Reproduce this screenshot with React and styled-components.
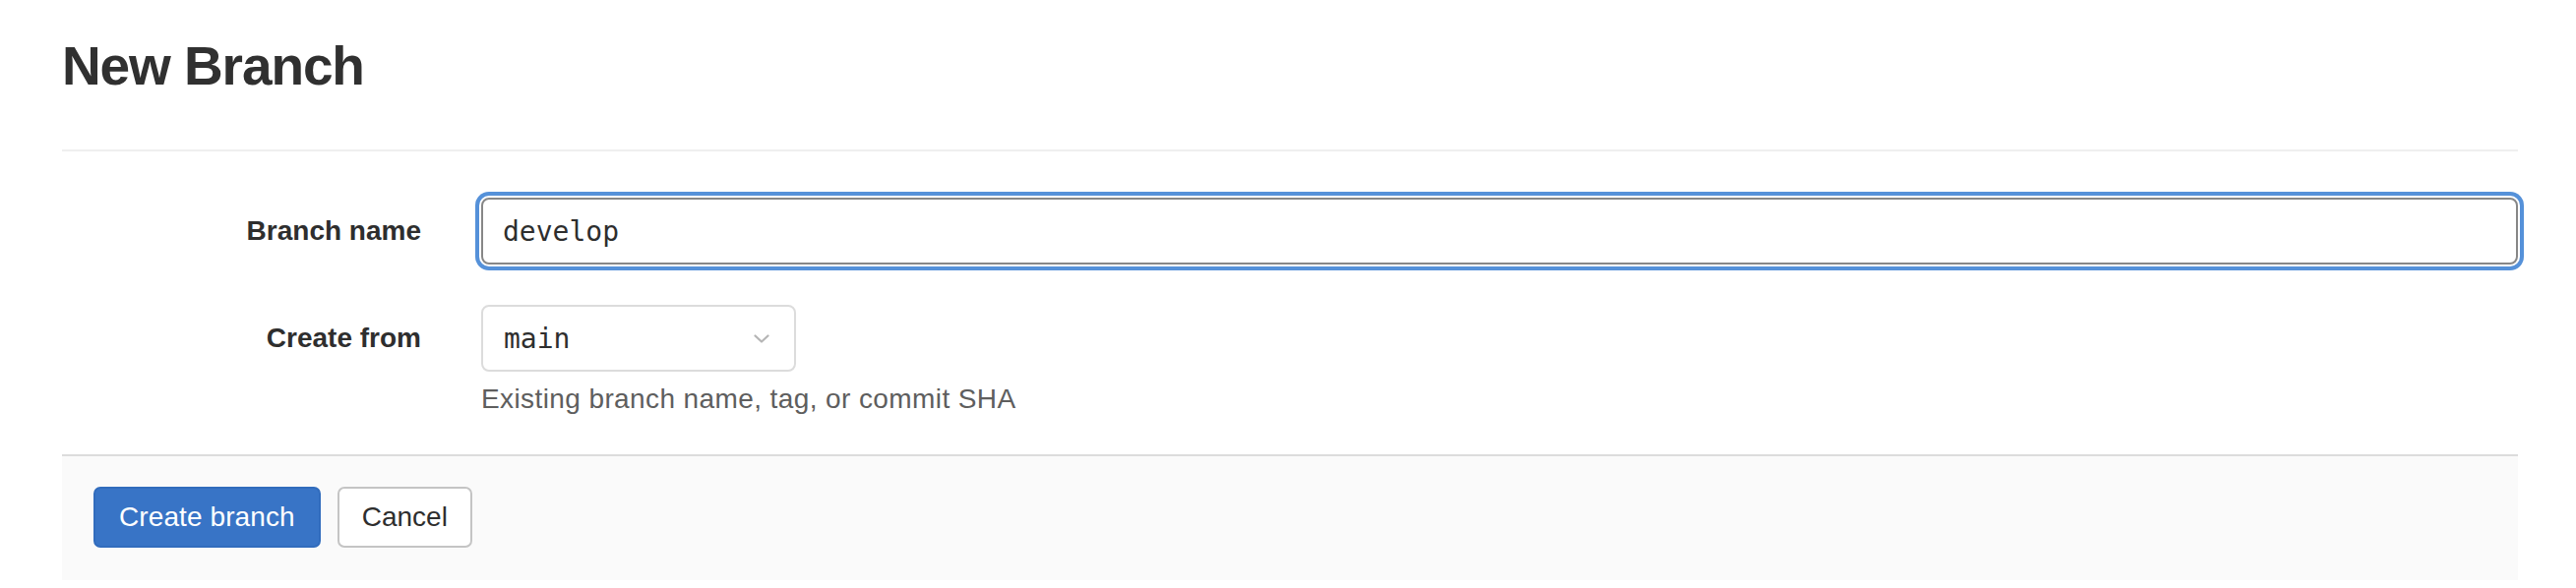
import React from "react";
import styled, { createGlobalStyle } from "styled-components";

const Global = createGlobalStyle`
  html, body { margin: 0; padding: 0; background: #fff; }
  body {
    font-family: "Liberation Sans", Arial, sans-serif;
    color: #2e2e2e;
    -webkit-font-smoothing: antialiased;
  }
  * { box-sizing: border-box; }
`;

const Page = styled.div`
  padding: 0 59px 0 63px;
  width: 2618px;
`;

const TitleBar = styled.div`
  padding: 40px 0 57px;
  border-bottom: 2px solid #efefef;
`;

const Title = styled.h3`
  margin: 0;
  font-size: 55px;
  line-height: 55px;
  font-weight: 700;
  letter-spacing: -1.1px;
  color: #303030;
`;

const Form = styled.form`
  margin: 0;
  padding-top: 47px;
`;

const Row = styled.div`
  display: grid;
  grid-template-columns: 365px 1fr;
  column-gap: 61px;
  align-items: start;
  margin-top: ${(p) => (p.$first ? "0" : "41px")};
`;

const Label = styled.label`
  height: 68px;
  display: flex;
  align-items: center;
  justify-content: flex-end;
  font-size: 28px;
  font-weight: 700;
  color: #2e2e2e;
`;

const Field = styled.div`
  display: flex;
  flex-direction: column;
  align-items: flex-start;
`;

const TextInput = styled.input`
  width: 100%;
  height: 68px;
  padding: 0 20px;
  border: 2px solid #878787;
  border-radius: 8px;
  font-family: "DejaVu Sans Mono", "Liberation Mono", monospace;
  font-size: 28px;
  color: #2e2e2e;
  background: #fff;
  outline: none;
  box-shadow: 0 0 0 2px #fff, 0 0 0 6px #5591d9;
`;

const Dropdown = styled.div`
  width: 320px;
  height: 68px;
  padding: 0 25px 0 21px;
  border: 2px solid #dcdcdc;
  border-radius: 8px;
  background: #fff;
  display: flex;
  align-items: center;
  justify-content: space-between;
  font-family: "DejaVu Sans Mono", "Liberation Mono", monospace;
  font-size: 28px;
  color: #2e2e2e;
`;

const HelpText = styled.p`
  margin: 8px 0 0;
  font-size: 28px;
  line-height: 40px;
  letter-spacing: 0.4px;
  color: #5e5e5e;
`;

const Footer = styled.div`
  margin-top: 36px;
  border-top: 2px solid #dcdcdc;
  background: #fafafa;
  padding: 31px 32px 33px;
  display: flex;
  gap: 17px;
`;

const Button = styled.button`
  height: 62px;
  padding: 0 ${(p) => (p.$primary ? "24px" : "23px")};
  border-radius: 7px;
  font-family: "Liberation Sans", Arial, sans-serif;
  font-size: 28px;
  letter-spacing: ${(p) => (p.$primary ? "0.1px" : "0")};
  cursor: pointer;
  border: 2px solid ${(p) => (p.$primary ? "#316cbd" : "#c4c4c4")};
  background: ${(p) => (p.$primary ? "#3874c6" : "#fff")};
  color: ${(p) => (p.$primary ? "#fff" : "#2e2e2e")};
`;

const Chevron = () => (
  <svg width="16" height="9" viewBox="0 0 16 9" fill="none">
    <polyline
      points="1.5,1.5 8,7.5 14.5,1.5"
      stroke="#b5b5b5"
      strokeWidth="2.2"
      strokeLinecap="round"
      strokeLinejoin="round"
    />
  </svg>
);

export default function App() {
  return (
    <>
      <Global />
      <Page>
        <TitleBar>
          <Title>New Branch</Title>
        </TitleBar>
        <Form onSubmit={(e) => e.preventDefault()}>
          <Row $first>
            <Label htmlFor="branch_name">Branch name</Label>
            <Field>
              <TextInput id="branch_name" defaultValue="develop" />
            </Field>
          </Row>
          <Row>
            <Label>Create from</Label>
            <Field>
              <Dropdown>
                <span>main</span>
                <Chevron />
              </Dropdown>
              <HelpText>Existing branch name, tag, or commit SHA</HelpText>
            </Field>
          </Row>
          <Footer>
            <Button type="submit" $primary>Create branch</Button>
            <Button type="button">Cancel</Button>
          </Footer>
        </Form>
      </Page>
    </>
  );
}
